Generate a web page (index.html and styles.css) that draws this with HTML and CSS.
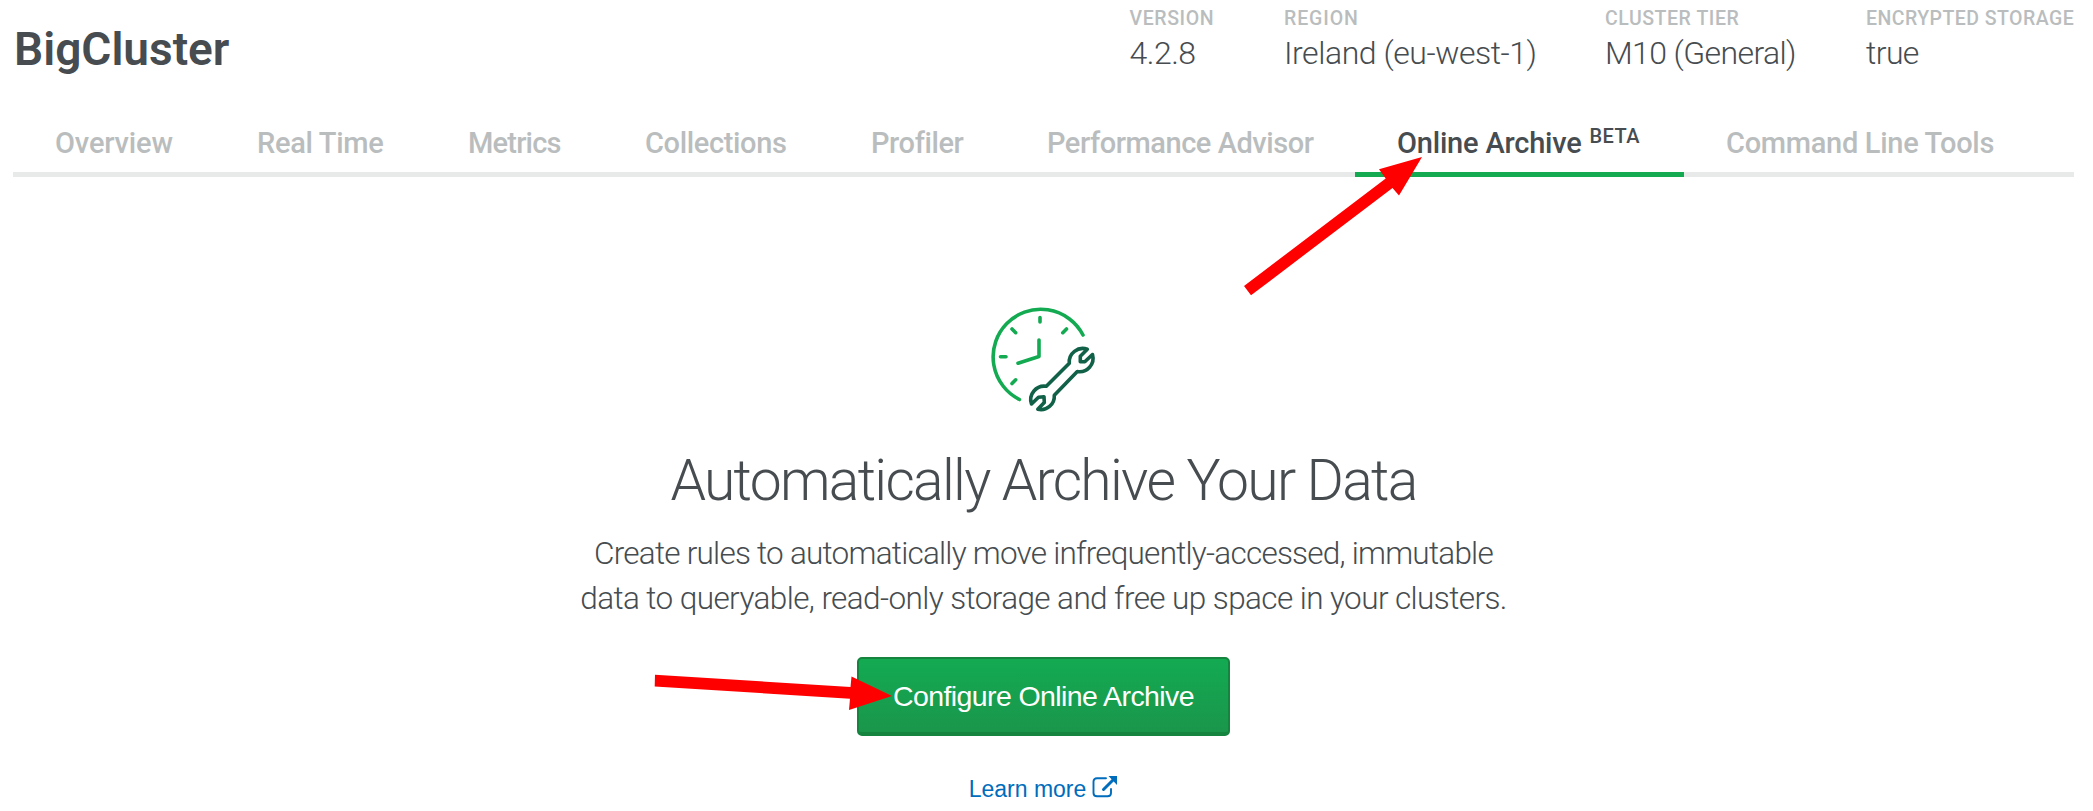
FILE: index.html
```html
<!DOCTYPE html>
<html lang="en">
<head>
<meta charset="utf-8">
<title>BigCluster - Online Archive</title>
<link rel="stylesheet" href="styles.css">
</head>
<body>
<header class="header">
  <h1 class="cluster-name">BigCluster</h1>
  <dl class="meta">
    <div class="meta-item version"><dt>VERSION</dt><dd>4.2.8</dd></div>
    <div class="meta-item region"><dt>REGION</dt><dd>Ireland (eu-west-1)</dd></div>
    <div class="meta-item tier"><dt>CLUSTER TIER</dt><dd>M10 (General)</dd></div>
    <div class="meta-item storage"><dt>ENCRYPTED STORAGE</dt><dd>true</dd></div>
  </dl>
</header>
<nav class="tabs">
  <a class="tab overview">Overview</a>
  <a class="tab realtime">Real Time</a>
  <a class="tab metrics">Metrics</a>
  <a class="tab collections">Collections</a>
  <a class="tab profiler">Profiler</a>
  <a class="tab advisor">Performance Advisor</a>
  <a class="tab archive active">Online Archive<sup>BETA</sup></a>
  <a class="tab tools">Command Line Tools</a>
</nav>
<main class="empty-state">
  <svg class="clock" width="112" height="112" viewBox="0 0 112 112" fill="none" stroke-linecap="round" stroke-linejoin="round">
    <g stroke="#13aa52" stroke-width="3.6">
      <path d="M97 32A47.6 47.6 0 1 0 33.500 96.500"/>
      <path d="M53 37v16.500l-21 6.700M54 14.500v4.500M80.500 26l-3.700 3.700M26 26l3.700 3.700M14.500 53.700h5.500M26 80.500l3.700-3.700"/>
    </g>
    <path stroke="#116149" stroke-width="3.600" d="M101.300 46.300A13.500 13.500 0 0 0 83.300 60.300L60.300 83.300A13.500 13.500 0 0 0 45.500 101L52.500 94.300L58 93.700L58.300 99.500L51.800 106.300A13.500 13.500 0 0 0 68.300 92.300L91.300 68.500A13.500 13.500 0 0 0 106.500 51.500L98.800 58.800L94.300 58.800L94.300 53.300Z"/>
  </svg>
  <h2 class="title">Automatically Archive Your Data</h2>
  <p class="description"><span class="first">Create rules to automatically move infrequently-accessed, immutable</span><br><span class="second">data to queryable, read-only storage and free up space in your clusters.</span></p>
  <button class="configure">Configure Online Archive</button>
  <a class="learn">Learn more
    <svg width="26" height="22" viewBox="0 0 26 22"><path d="M14 2.300H5Q1.500 2.300 1.500 5.500V17Q1.500 20.300 5 20.300H15.500Q19 20.300 19 17V13" fill="none" stroke="#006cbc" stroke-width="1.900" stroke-linecap="round"/><path d="M11.500 13.500L21 4" stroke="#006cbc" stroke-width="3" stroke-linecap="round"/><path d="M16.500 0H25V9Z" fill="#006cbc"/></svg>
  </a>
</main>
<svg class="arrows" width="2093" height="811" viewBox="0 0 2093 811" fill="#f00">
  <path d="M1244 286L1385.700 178.500L1379 169.300L1422 157L1399 195.500L1392.500 188L1251 295.300Z"/>
  <path d="M655 674.700L850.500 687L851.500 676.500L892 696L849 710L850 698.700L654.700 686.500Z"/>
</svg>
</body>
</html>
```
FILE: styles.css
```css
* { box-sizing: border-box; }
body {
  margin: 0;
  width: 2093px;
  height: 811px;
  overflow: hidden;
  position: relative;
  background: #fff;
  color: #464c4f;
  font-family: Roboto, "Liberation Sans", sans-serif;
}
.header {
  display: flex;
  justify-content: space-between;
  height: 110px;
  padding-left: 14px;
}
.cluster-name {
  margin: 21px 0 0;
  font-size: 46px;
  font-weight: 600;
  line-height: 56px;
}
.meta { display: flex; margin: 8px 0 0; }
.meta-item { white-space: nowrap; }
.meta dt {
  color: #babdbe;
  font-size: 19.5px;
  font-weight: 500;
  line-height: 22px;
}
.meta dd {
  margin: 3px 0 0;
  font-size: 32px;
  font-weight: 300;
  line-height: 40px;
}
.version { width: 154.500px; }
.version dt { letter-spacing: .6px; }
.version dd { letter-spacing: -.5px; }
.region { width: 321px; }
.region dt { letter-spacing: .9px; }
.region dd { letter-spacing: -.45px; }
.tier { width: 261px; }
.tier dt { letter-spacing: .55px; }
.tier dd { letter-spacing: -.6px; }
.storage { width: 227px; }
.storage dt { letter-spacing: .45px; }
.storage dd { letter-spacing: -.6px; }
.tabs {
  display: flex;
  width: 2061px;
  height: 67px;
  margin-left: 13px;
  box-shadow: inset 0 -5px #e7eae9;
}
.tab {
  padding: 14px 0 0 42px;
  color: #babdbe;
  font-size: 29px;
  font-weight: 500;
  line-height: 38px;
  white-space: nowrap;
}
.overview { width: 202px; letter-spacing: -.15px; }
.realtime { width: 211px; letter-spacing: -.3px; }
.metrics { width: 177px; letter-spacing: -.8px; }
.collections { width: 226px; letter-spacing: -.35px; }
.profiler { width: 176px; letter-spacing: -.4px; }
.advisor { width: 350px; letter-spacing: -.46px; }
.archive { width: 329px; letter-spacing: -.2px; }
.tools { flex: 1; letter-spacing: -.3px; }
.active { color: #464c4f; box-shadow: inset 0 -5px #13aa52; }
.active sup {
  margin-left: 8px;
  font-size: 20px;
  line-height: 0;
  letter-spacing: .4px;
  vertical-align: 10px;
}
.empty-state {
  display: flex;
  flex-direction: column;
  align-items: center;
  padding: 127px 6px 0 0;
}
.clock { margin: -1px 3px 0 0; }
.title {
  margin: 31px 0 0;
  font-size: 57px;
  font-weight: 300;
  line-height: 70px;
  letter-spacing: -1.7px;
}
.description {
  margin: 15px 0 0;
  font-size: 31.5px;
  font-weight: 300;
  line-height: 45px;
  text-align: center;
  white-space: nowrap;
}
.first { letter-spacing: -.77px; }
.second { letter-spacing: -.6px; }
.configure {
  width: 373px;
  height: 79px;
  margin-top: 36px;
  padding: 2px 0 0;
  border: 2px solid #14843f;
  border-bottom-width: 4px;
  border-radius: 5px;
  background: linear-gradient(#13aa52, #1a964b);
  color: #fff;
  font: 28.5px "Liberation Sans", sans-serif;
  letter-spacing: -.6px;
}
.learn {
  display: flex;
  align-items: center;
  gap: 6px;
  height: 30px;
  margin-top: 38px;
  color: #006cbc;
  font: 23px "Liberation Sans", sans-serif;
}
.learn svg { margin-top: -4px; }
.arrows { position: absolute; top: 0; left: 0; }
```
